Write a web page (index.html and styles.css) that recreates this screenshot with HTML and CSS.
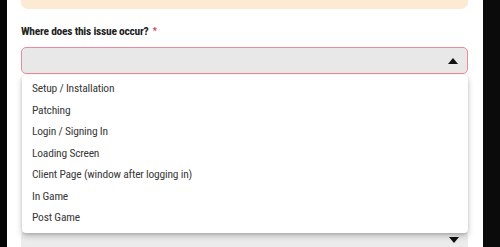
FILE: index.html
```html
<!DOCTYPE html>
<html>
<head>
<meta charset="utf-8">
<link rel="stylesheet" href="styles.css">
</head>
<body>
<div class="frame">
  <div class="edge-left"></div>
  <main class="panel">
    <div class="banner"></div>
    <div class="field">
      <label class="label">Where does this issue occur? <span class="req">*</span></label>
      <div class="select open">
        <svg class="caret" width="10" height="6" viewBox="0 0 10 6"><path d="M0 6 L5 0 L10 6 Z" fill="#111"/></svg>
      </div>
      <ul class="menu">
        <li>Setup / Installation</li>
        <li>Patching</li>
        <li>Login / Signing In</li>
        <li>Loading Screen</li>
        <li>Client Page (window after logging in)</li>
        <li>In Game</li>
        <li>Post Game</li>
      </ul>
    </div>
    <div class="field under">
      <div class="select grey">
        <svg class="caret" width="10" height="6" viewBox="0 0 10 6"><path d="M0 0 L5 6 L10 0 Z" fill="#111"/></svg>
      </div>
    </div>
  </main>
  <div class="edge-right"></div>
</div>
</body>
</html>
```

FILE: styles.css
```css
* { box-sizing: border-box; }
html, body { margin: 0; padding: 0; }
body {
  background: #0a0a0a;
  width: 500px;
  height: 247px;
  overflow: hidden;
  font-family: Roboto, "Liberation Sans", sans-serif;
  font-stretch: 75%;
}
.frame {
  display: flex;
  height: 247px;
}
.edge-left { width: 7px; background: #050505; flex: none; }
.edge-right { flex: 1; background: #0b0b0b; }
.panel {
  width: 476px;
  flex: none;
  background: #ffffff;
  padding: 0 15px 0 14px;
  position: relative;
  overflow: hidden;
}
.banner {
  height: 9px;
  background: #fcebd2;
  border-radius: 0 0 7px 7px;
}
.field { position: relative; }
.label {
  display: block;
  margin-top: 14px;
  font-size: 11.5px;
  font-weight: 700;
  line-height: 16px;
  color: #222;
  letter-spacing: -0.25px;
}
.req { color: #e0304f; font-size: 9px; vertical-align: 1px; margin-left: 2px; }
.select {
  margin-top: 8px;
  height: 27px;
  border-radius: 5px;
  background: #e8e8e8;
  display: flex;
  align-items: center;
  justify-content: flex-end;
  padding-right: 9px;
}
.select.open { border: 1.5px solid #ec8a9c; }
.caret { display: block; }
.menu {
  position: absolute;
  top: 52px;
  left: 1px;
  right: 0;
  margin: 0;
  padding: 3px 0 4px;
  list-style: none;
  background: #fff;
  border-radius: 4px;
  box-shadow: 0 3px 6px rgba(0,0,0,0.22), 0 1px 3px rgba(0,0,0,0.12);
  z-index: 2;
}
.menu li {
  height: 21.5px;
  line-height: 21.5px;
  padding-left: 10px;
  font-size: 11.5px;
  color: #3a3a3a;
  letter-spacing: -0.2px;
}
.under { margin-top: 157px; }
.select.grey { margin-top: 0; background: #ececec; height: 28px; align-items: flex-start; padding-top: 6px; }
```
